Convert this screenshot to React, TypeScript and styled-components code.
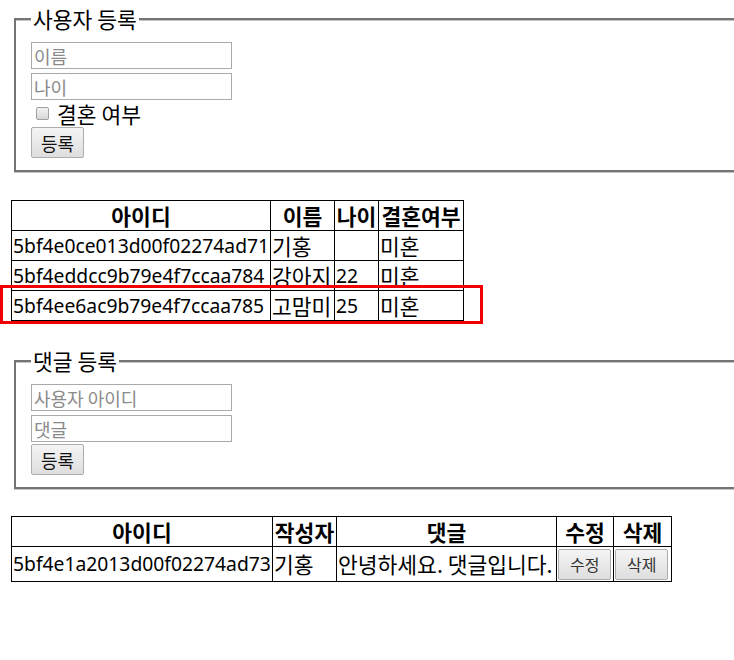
import React from "react";
import styled, { createGlobalStyle } from "styled-components";

const GlobalStyle = createGlobalStyle`
    body {
        margin: 0;
        background: white;
        overflow: hidden;
    }
`;

const FONT = `"Noto Sans CJK KR", "Noto Sans", sans-serif`;
const LATIN = `"Noto Sans", "Noto Sans CJK KR", sans-serif`;

const Page = styled.div`
    position: relative;
    width: 734px;
    min-height: 660px;
    overflow: hidden;
    padding: 6px 0 0 11px;
    box-sizing: border-box;
    font-family: ${FONT};
    font-size: 21.5px;
    color: black;
`;

const Fieldset = styled.fieldset<{ $top?: number }>`
    width: 760px;
    margin: ${(p) => p.$top ?? 0}px 0 0 3px;
    padding: 0 0 12px 15px;
    border: 2px solid #747474;
    box-shadow: inset 0 1px 0 #c6c6c6, 0 1px 0 #c6c6c6;
    box-sizing: border-box;
`;

const Legend = styled.legend`
    padding: 0 2px;
    line-height: 26px;
    font-size: 21.5px;
    background: white;
`;

const Form = styled.form`
    display: flex;
    flex-direction: column;
    align-items: flex-start;
    padding-top: 10px;
`;

const Input = styled.input<{ $gap?: number }>`
    width: 201px;
    height: 27px;
    box-sizing: border-box;
    margin: 0 0 ${(p) => p.$gap ?? 4}px 0;
    padding: 0 2px;
    border: 1px solid #a9a9a9;
    font-family: ${FONT};
    font-size: 18px;

    &::placeholder {
        color: #8a8a8a;
    }
`;

const CheckRow = styled.label`
    display: flex;
    align-items: center;
    height: 27px;
    margin-top: -4px;
    padding-left: 5px;
    gap: 8px;
    line-height: 27px;
`;

const Check = styled.input`
    width: 13px;
    height: 13px;
    margin: 0;
    appearance: none;
    border: 1px solid #a0a0a0;
    border-radius: 2px;
    background: linear-gradient(#f2f2f2, #d8d8d8);
    box-sizing: border-box;
`;

const Button = styled.button<{ $small?: boolean }>`
    height: 31px;
    padding: 0 ${(p) => (p.$small ? 11 : 9)}px;
    margin: 0;
    border: 1px solid #adadad;
    border-radius: 2px;
    background: linear-gradient(#f4f4f4, #dedede);
    font-family: ${FONT};
    font-size: ${(p) => (p.$small ? 16 : 18)}px;
    line-height: 1;
    color: ${(p) => (p.$small ? "#333" : "#111")};
`;

const TableWrap = styled.div<{ $top: number }>`
    position: relative;
    margin-top: ${(p) => p.$top}px;
`;

const Table = styled.table`
    border-collapse: collapse;
`;

const Th = styled.th<{ $w: number }>`
    width: ${(p) => p.$w}px;
    border: 1px solid black;
    padding: 1px 0;
    line-height: 27px;
    font-weight: bold;
    text-align: center;
    white-space: nowrap;
`;

const Td = styled.td<{ $latin?: boolean }>`
    border: 1px solid black;
    padding: 1px 0 1px 1px;
    line-height: 27px;
    white-space: nowrap;
    font-family: ${(p) => (p.$latin ? LATIN : FONT)};
    font-size: ${(p) => (p.$latin ? 19.3 : 21.5)}px;
`;

const ButtonTd = styled(Td)`
    padding: 1px;
`;

const Highlight = styled.div`
    position: absolute;
    left: -11px;
    top: 85px;
    width: 483px;
    height: 39px;
    border: 3px solid #f00000;
    box-sizing: border-box;
    pointer-events: none;
`;

const users = [
    { id: "5bf4e0ce013d00f02274ad71", name: "기홍", age: "", married: "미혼" },
    { id: "5bf4eddcc9b79e4f7ccaa784", name: "강아지", age: "22", married: "미혼" },
    { id: "5bf4ee6ac9b79e4f7ccaa785", name: "고맘미", age: "25", married: "미혼" },
];

const comments = [
    { id: "5bf4e1a2013d00f02274ad73", writer: "기홍", text: "안녕하세요. 댓글입니다." },
];

export default function App() {
    return (
        <Page>
            <GlobalStyle />
            <Fieldset>
                <Legend>사용자 등록</Legend>
                <Form onSubmit={(e) => e.preventDefault()}>
                    <Input placeholder="이름" />
                    <Input placeholder="나이" />
                    <CheckRow>
                        <Check type="checkbox" />
                        결혼 여부
                    </CheckRow>
                    <Button type="submit">등록</Button>
                </Form>
            </Fieldset>

            <TableWrap $top={28}>
                <Table>
                    <thead>
                        <tr>
                            <Th $w={258}>아이디</Th>
                            <Th $w={63}>이름</Th>
                            <Th $w={43}>나이</Th>
                            <Th $w={84}>결혼여부</Th>
                        </tr>
                    </thead>
                    <tbody>
                        {users.map((u) => (
                            <tr key={u.id}>
                                <Td $latin>{u.id}</Td>
                                <Td>{u.name}</Td>
                                <Td $latin>{u.age}</Td>
                                <Td>{u.married}</Td>
                            </tr>
                        ))}
                    </tbody>
                </Table>
                <Highlight />
            </TableWrap>

            <Fieldset $top={27}>
                <Legend>댓글 등록</Legend>
                <Form onSubmit={(e) => e.preventDefault()}>
                    <Input placeholder="사용자 아이디" />
                    <Input placeholder="댓글" $gap={2} />
                    <Button type="submit">등록</Button>
                </Form>
            </Fieldset>

            <TableWrap $top={27}>
                <Table>
                    <thead>
                        <tr>
                            <Th $w={260}>아이디</Th>
                            <Th $w={63}>작성자</Th>
                            <Th $w={219}>댓글</Th>
                            <Th $w={56}>수정</Th>
                            <Th $w={57}>삭제</Th>
                        </tr>
                    </thead>
                    <tbody>
                        {comments.map((c) => (
                            <tr key={c.id}>
                                <Td $latin>{c.id}</Td>
                                <Td>{c.writer}</Td>
                                <Td>{c.text}</Td>
                                <ButtonTd>
                                    <Button $small>수정</Button>
                                </ButtonTd>
                                <ButtonTd>
                                    <Button $small>삭제</Button>
                                </ButtonTd>
                            </tr>
                        ))}
                    </tbody>
                </Table>
            </TableWrap>
        </Page>
    );
}
